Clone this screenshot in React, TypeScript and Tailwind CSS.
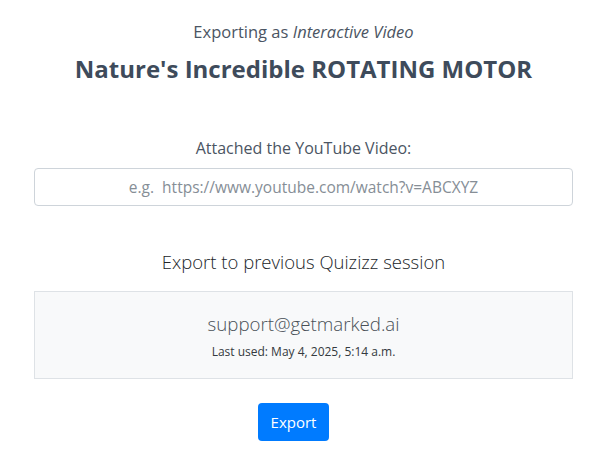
export default function App() {
  return (
    <div className="w-[612px] h-[472px] bg-white pl-[34px] pr-[39px] pt-[20px] text-center font-['Open_Sans',sans-serif]">
      {/* Header */}
      <p className="text-[16.5px] leading-[24px] text-[#4b5563]">
        Exporting as <em>Interactive Video</em>
      </p>
      <h1 className="mt-[10px] text-[24px] font-bold leading-[30px] text-[#3e4b5b]">
        Nature's Incredible ROTATING MOTOR
      </h1>

      {/* YouTube link */}
      <label className="mt-[52px] block text-[16px] leading-[24px] text-[#4b5563]">
        Attached the YouTube Video:
      </label>
      <input
        type="text"
        placeholder="e.g.  https://www.youtube.com/watch?v=ABCXYZ"
        className="mt-[8px] block h-[38px] w-full rounded-[4px] border border-[#ced4da] bg-white px-3 text-center text-[15.5px] text-[#495057] placeholder:text-[#868e96] outline-none"
      />

      {/* Previous session */}
      <h2 className="mt-[42px] text-[18.5px] font-light leading-[27px] text-[#212529]">
        Export to previous Quizizz session
      </h2>
      <div className="mt-[16px] h-[88px] border border-[#dee2e6] bg-[#f8f9fa] pt-[17px]">
        <div className="text-[18.7px] font-light leading-[30px] text-[#495057]">support@getmarked.ai</div>
        <div className="mt-[4px] text-[12px] leading-[18px] text-[#343a40]">Last used: May 4, 2025, 5:14 a.m.</div>
      </div>

      <div className="mt-[24px] flex justify-center pr-[20px]">
        <button className="h-[38px] w-[71px] rounded-[4px] bg-[#007bff] text-[15px] text-white">
          Export
        </button>
      </div>
    </div>
  );
}
